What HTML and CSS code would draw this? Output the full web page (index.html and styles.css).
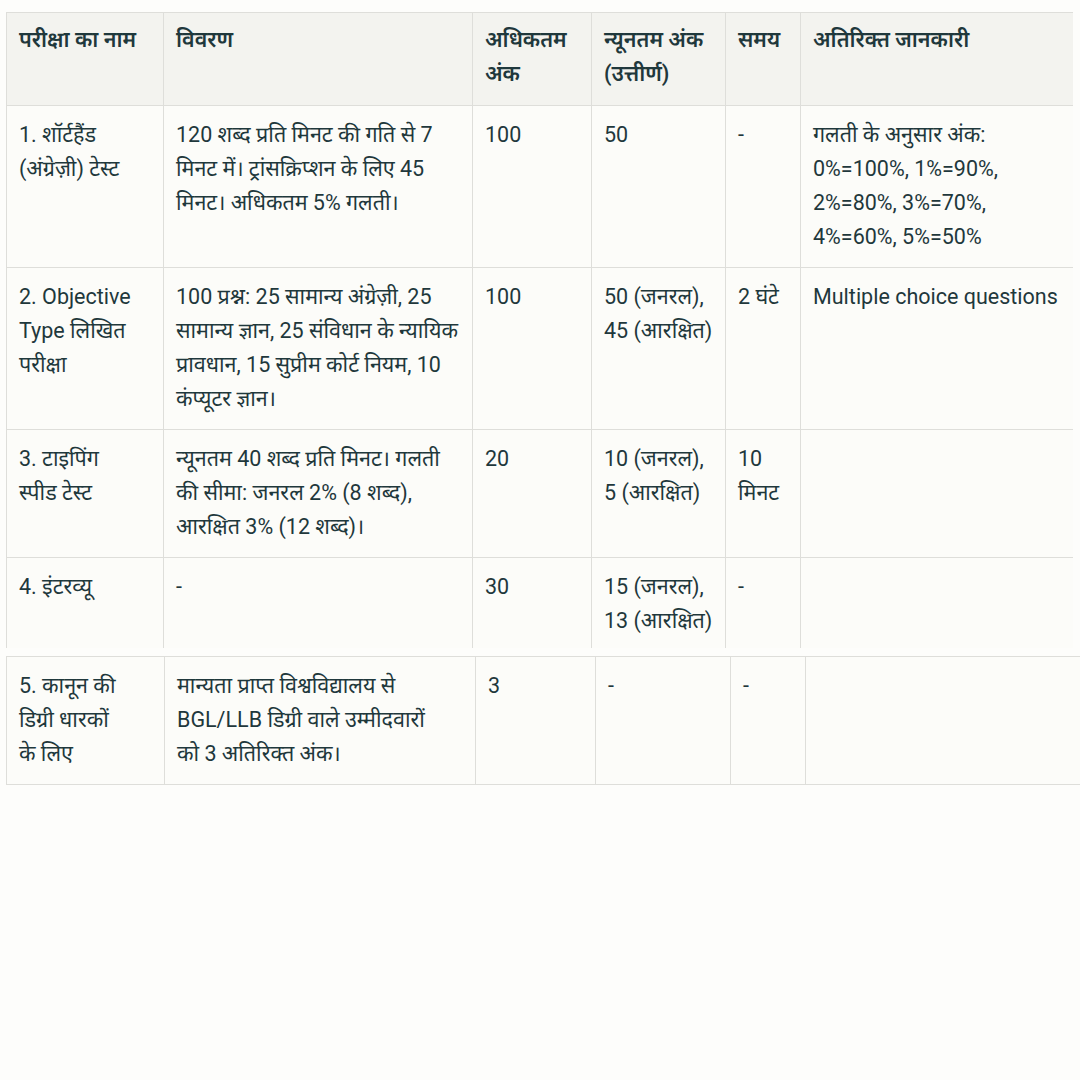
FILE: index.html
```html
<!DOCTYPE html>
<html lang="hi">
<head>
<meta charset="utf-8">
<link rel="stylesheet" href="styles.css">
</head>
<body>
<div class="clip">
<table class="grid t1">
<colgroup>
<col class="c1"><col class="c2"><col class="c3"><col class="c4"><col class="c5"><col class="c6">
</colgroup>
<thead>
<tr>
<th>परीक्षा का नाम</th>
<th>विवरण</th>
<th>अधिकतम अंक</th>
<th>न्यूनतम अंक (उत्तीर्ण)</th>
<th>समय</th>
<th>अतिरिक्त जानकारी</th>
</tr>
</thead>
<tbody>
<tr>
<td>1. शॉर्टहैंड (अंग्रेज़ी) टेस्ट</td>
<td>120 शब्द प्रति मिनट की गति से 7 मिनट में। ट्रांसक्रिप्शन के लिए 45 मिनट। अधिकतम 5% गलती।</td>
<td>100</td>
<td>50</td>
<td>-</td>
<td>गलती के अनुसार अंक: 0%=100%, 1%=90%, 2%=80%, 3%=70%, 4%=60%, 5%=50%</td>
</tr>
<tr>
<td>2. Objective Type लिखित परीक्षा</td>
<td>100 प्रश्न: 25 सामान्य अंग्रेज़ी, 25 सामान्य ज्ञान, 25 संविधान के न्यायिक प्रावधान, 15 सुप्रीम कोर्ट नियम, 10 कंप्यूटर ज्ञान।</td>
<td>100</td>
<td>50 (जनरल), 45 (आरक्षित)</td>
<td>2 घंटे</td>
<td>Multiple choice questions</td>
</tr>
<tr>
<td>3. टाइपिंग स्पीड&nbsp;टेस्ट</td>
<td>न्यूनतम 40 शब्द प्रति मिनट। गलती की सीमा: जनरल 2% (8 शब्द), आरक्षित 3% (12 शब्द)।</td>
<td>20</td>
<td>10 (जनरल), 5 (आरक्षित)</td>
<td>10 मिनट</td>
<td></td>
</tr>
<tr>
<td>4. इंटरव्यू</td>
<td>-</td>
<td>30</td>
<td>15 (जनरल), 13 (आरक्षित)</td>
<td>-</td>
<td></td>
</tr>
</tbody>
</table>
</div>
<table class="grid t2">
<colgroup>
<col class="d1"><col class="d2"><col class="d3"><col class="d4"><col class="d5"><col class="d6">
</colgroup>
<tbody>
<tr>
<td>5. कानून की डिग्री धारकों के&nbsp;लिए</td>
<td>मान्यता प्राप्त विश्वविद्यालय से BGL/LLB डिग्री वाले उम्मीदवारों को&nbsp;3 अतिरिक्त अंक।</td>
<td>3</td>
<td>-</td>
<td>-</td>
<td></td>
</tr>
</tbody>
</table>
</body>
</html>
```
FILE: styles.css
```css
html, body {
  margin: 0;
  padding: 0;
  background: #fdfdfb;
}
body {
  padding: 12px 0 0 6px;
  font-family: "Roboto", "Noto Sans Devanagari", "Noto Sans", sans-serif;
  font-size: 21.5px;
  color: #1f383c;
}
.clip {
  height: 636px;
  overflow: hidden;
  width: 1067px;
}
.grid {
  border-collapse: collapse;
  table-layout: fixed;
  background: #fcfcf9;
}
.t1 { width: 1067px; }
.t2 { width: 1074px; margin-top: 8px; }
.grid th,
.grid td {
  border: 1px solid #dededa;
  padding: 12px 12px 13px 12px;
  vertical-align: top;
  text-align: left;
  line-height: 34px;
  font-weight: 400;
}
.grid th {
  background: #f3f3ef;
  font-weight: 600;
  padding-top: 10px;
  padding-bottom: 14px;
}
.c1 { width: 157px; }
.c2 { width: 309px; }
.c3 { width: 119px; }
.c4 { width: 134px; }
.c5 { width: 75px; }
.c6 { width: 273px; }
.d1 { width: 158px; }
.d2 { width: 311px; }
.d3 { width: 120px; }
.d4 { width: 135px; }
.d5 { width: 75px; }
.d6 { width: 275px; }
```
